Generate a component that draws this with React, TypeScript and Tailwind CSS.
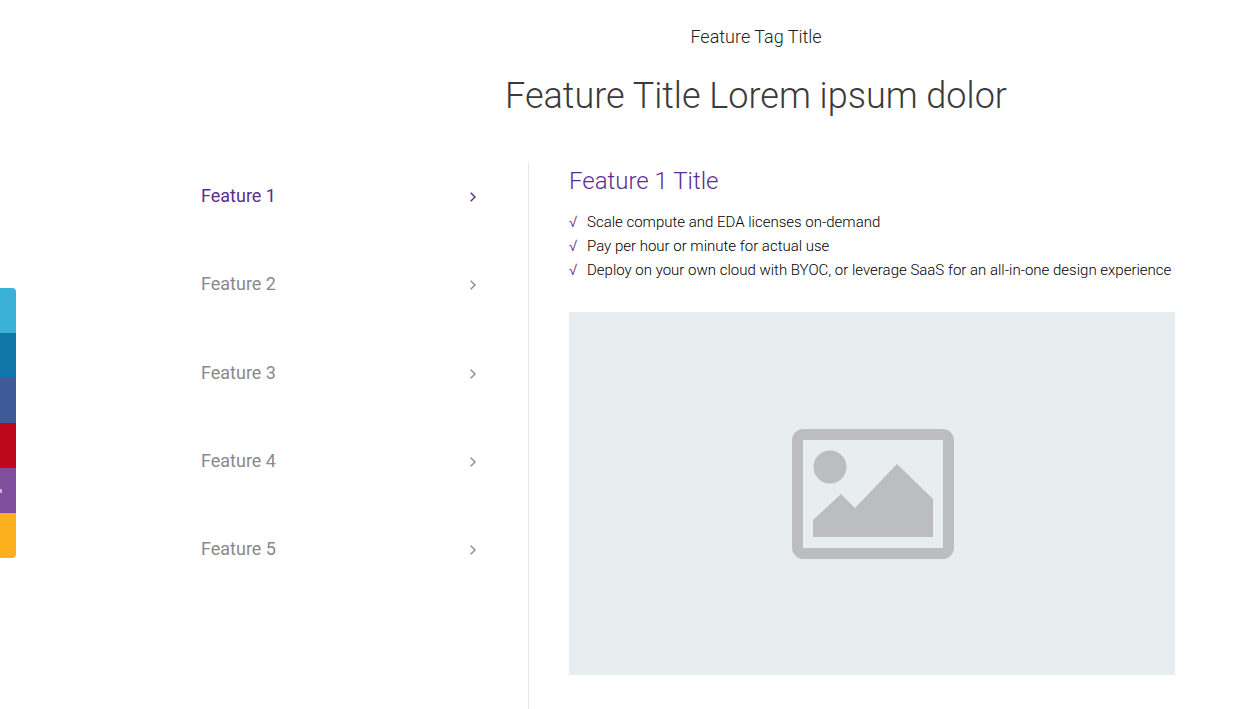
const features = ["Feature 1", "Feature 2", "Feature 3", "Feature 4", "Feature 5"];

const bullets = [
  "Scale compute and EDA licenses on-demand",
  "Pay per hour or minute for actual use",
  "Deploy on your own cloud with BYOC, or leverage SaaS for an all-in-one design experience",
];

const socials = ["bg-[#3cb1d8]", "bg-[#0e76a8]", "bg-[#3f5a99]", "bg-[#bd081c]", "bg-[#7f4f9e]", "bg-[#fdb01e]"];

const Chevron = ({ active }: { active: boolean }) => (
  <svg width="8" height="12" viewBox="0 0 8 12" fill="none" className={active ? "text-[#5c2d91]" : "text-[#8a8a8a]"}>
    <path d="M1.7 1.7 6 6l-4.3 4.3" stroke="currentColor" strokeWidth="1.4" />
  </svg>
);

const ImageIcon = () => (
  <svg width="162" height="130" viewBox="0 0 162 130" fill="none">
    <rect x="5.5" y="5.5" width="151" height="119" rx="6" stroke="#bcbdbe" strokeWidth="11" />
    <circle cx="38" cy="38" r="16.5" fill="#bcbdbe" />
    <path d="M21 91 49 65 63 79 105 35 141 70V108H21Z" fill="#bcbdbe" />
  </svg>
);

const App = () => {
  return (
    <div className="relative h-[709px] overflow-hidden bg-white font-['Roboto',sans-serif]">
      <div className="absolute left-0 top-[288px] w-4 overflow-hidden rounded-r-[4px]">
        {socials.map((color) => (
          <div key={color} className={`flex h-[45px] items-center ${color}`}>
            {color === "bg-[#7f4f9e]" && <span className="h-1 w-[2px] bg-[#c9b4d8]" />}
          </div>
        ))}
      </div>

      <header className="pl-[337px] pr-[84px] pt-[25px] text-center">
        <p className="text-[18px] leading-6 font-light text-[#222]">Feature Tag Title</p>
        <h1 className="mt-[25px] text-[36px] leading-[44px] font-light text-[#3a3a3a]">Feature Title Lorem ipsum dolor</h1>
      </header>

      <div className="mt-[44px] flex h-[547px] pl-[201px]">
        <nav className="flex w-[328px] flex-col border-r border-[#e8e8e8] pr-[51px] pt-[20px]">
          {features.map((feature, i) => (
            <div key={feature} className="flex h-[88.25px] items-start justify-between">
              <span className={`text-[18px] leading-7 ${i === 0 ? "text-[#5c2d91]" : "text-[#8a8a8a]"}`}>{feature}</span>
              <span className="mt-[9px]">
                <Chevron active={i === 0} />
              </span>
            </div>
          ))}
        </nav>

        <main className="ml-[40px] w-[606px] pt-px">
          <h2 className="text-[24px] leading-9 font-light text-[#5c2d91]">Feature 1 Title</h2>
          <ul className="mt-[11px]">
            {bullets.map((bullet) => (
              <li key={bullet} className="flex h-6 items-center text-[15px] font-light whitespace-nowrap text-[#000]">
                <span className="w-[18px] text-[16px] text-[#5c2d91]">√</span>
                {bullet}
              </li>
            ))}
          </ul>
          <div className="mt-[30px] flex h-[363px] items-center justify-center bg-[#e8edef] pl-[2px]">
            <ImageIcon />
          </div>
        </main>
      </div>
    </div>
  );
};

export default App;
